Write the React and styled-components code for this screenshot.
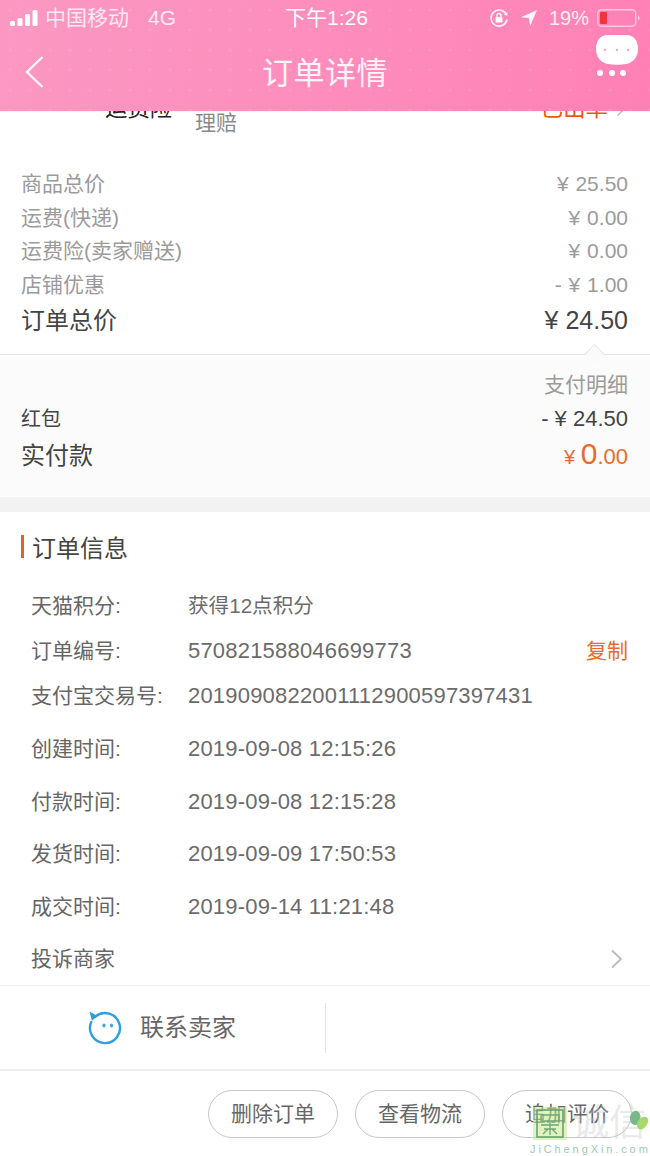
import React from "react";
import styled, { createGlobalStyle } from "styled-components";

const Global = createGlobalStyle`
  html, body { margin: 0; padding: 0; background: #fff; }
  body { font-family: "Liberation Sans", "Noto Sans CJK SC", sans-serif; }
  * { box-sizing: border-box; }
`;
const Page = styled.div`
  position: relative;
  width: 650px;
  height: 1156px;
  overflow: hidden;
  background: #fff;
  display: flex;
  flex-direction: column;
`;
const Header = styled.header`
  position: relative;
  z-index: 2;
  flex: none;
  height: 111px;
  color: #fff;
  background-color: #fe8cbb;
  background-image:
    radial-gradient(circle, rgba(255,255,255,.09) 1.4px, transparent 1.8px),
    linear-gradient(100deg, #fb98c2 0%, #fd8dbc 50%, #ff80b5 100%);
  background-size: 20px 20px, 100% 100%;
  box-shadow: 0 0 1px rgba(160,60,100,.4);
`;
const StatusBar = styled.div`
  height: 36px;
  padding: 0 10px;
  display: flex;
  align-items: center;
  justify-content: space-between;
  position: relative;
`;
const StatusSide = styled.div`
  display: flex;
  align-items: center;
  gap: ${p => p.$gap || 6}px;
`;
const StatusTime = styled.div`
  position: absolute;
  left: 285px;
  top: 5px;
  font-size: 21px;
  line-height: 26px;
  white-space: nowrap;
`;
const Carrier = styled.span`
  font-size: 21px;
  line-height: 26px;
  opacity: .8;
`;
const NetType = styled.span`
  margin-left: 13px;
  font-size: 21px;
  line-height: 26px;
  opacity: .8;
`;
const Percent = styled.span`
  font-size: 20px;
  line-height: 26px;
  margin-right: -3px;
  opacity: .85;
`;
const NavBar = styled.div`
  position: relative;
  height: 75px;
  display: flex;
  align-items: center;
  justify-content: center;
`;
const NavTitle = styled.h1`
  margin: 0 0 6px;
  font-size: 31px;
  font-weight: 400;
  letter-spacing: 0.5px;
  color: rgba(255,255,255,.92);
`;
const BackIcon = styled.svg`
  position: absolute;
  left: 24px;
  top: 19px;
`;
const MoreIcon = styled.svg`
  position: absolute;
  left: 596px;
  top: -1px;
`;
const Content = styled.main`
  flex: 1;
  display: flex;
  flex-direction: column;
  min-height: 0;
`;
const ClippedRow = styled.div`
  height: 58px;
  margin-top: -15px;
  position: relative;
  flex: none;
  display: flex;
  padding: 0 24px 0 105px;
  font-size: 22.4px;
`;
const InsuranceName = styled.span`
  color: #222;
  line-height: 26px;
  width: 90px;
`;
const InsuranceNote = styled.span`
  color: #8a8a8a;
  font-size: 21px;
  line-height: 28px;
  margin-top: 13px;
`;
const InsuranceState = styled.span`
  margin-left: auto;
  color: #e8590c;
  line-height: 26px;
  display: flex;
  gap: 8px;
  align-items: center;
  height: 26px;
`;
const Summary = styled.section`
  flex: none;
  height: 201px;
  padding: 13px 22px 0 21px;
  border-bottom: 1px solid #e4e4e4;
  position: relative;
`;
const PriceRow = styled.div`
  display: flex;
  justify-content: space-between;
  align-items: baseline;
  height: ${p => p.$h || 33.7}px;
  line-height: ${p => p.$h || 33.7}px;
  color: ${p => p.$color || "#9b9b9b"};
  font-size: ${p => p.$size || 21}px;
`;
const Money = styled.span`
  font-size: ${p => p.$size || 21}px;
  word-spacing: ${p => (p.$size ? 0 : 1)}px;
  color: ${p => p.$color || "inherit"};
`;
const Notch = styled.span`
  position: absolute;
  right: 48px;
  bottom: -8px;
  width: 15px;
  height: 15px;
  transform: rotate(45deg);
  background: #fafafa;
  border-left: 1px solid #e4e4e4;
  border-top: 1px solid #e4e4e4;
`;
const PayPanel = styled.section`
  flex: none;
  height: 142px;
  padding: 13px 22px 0 21px;
  background: #fbfbfb;
`;
const DetailLink = styled.div`
  text-align: right;
  color: #9b9b9b;
  font-size: 21px;
  line-height: 33px;
  margin-bottom: 2px;
`;
const Gap = styled.div`
  flex: none;
  height: 15px;
  background: #f2f2f2;
`;
const Info = styled.section`
  flex: 1;
`;
const InfoTitle = styled.h2`
  margin: 23px 0 0 21px;
  padding-left: 8px;
  height: 23px;
  display: flex;
  align-items: center;
  border-left: 3px solid #e8601c;
  font-size: 24px;
  font-weight: 400;
  color: #444;
`;
const InfoRows = styled.div`
  margin-top: 33px;
  padding: 0 22px 0 31px;
`;
const InfoRow = styled.div`
  display: flex;
  align-items: baseline;
  height: ${p => p.$h}px;
  line-height: 30px;
  color: #666;
  font-size: 21px;
`;
const Label = styled.span`
  flex: none;
  width: 157px;
  white-space: nowrap;
`;
const Value = styled.span`
  flex: 1;
  white-space: nowrap;
  color: #6b6b6b;
  font-size: ${p => (p.$cjk ? 20.6 : 22)}px;
  letter-spacing: ${p => (p.$cjk ? 0 : 0.2)}px;
`;
const CopyLink = styled.span`
  color: #e96a2b;
`;
const RowChevron = styled.span`
  margin-right: 5px;
  align-self: center;
  display: flex;
  margin-top: -10px;
`;
const ContactBar = styled.div`
  flex: none;
  height: 86px;
  border-top: 1px solid #f3f3f3;
  border-bottom: 2px solid #efefef;
  display: flex;
  align-items: center;
`;
const ContactCell = styled.div`
  width: 326px;
  height: 50px;
  border-right: 1px solid #e3e3e3;
  padding-left: 88px;
  display: flex;
  align-items: center;
  gap: 18px;
  color: #666;
  font-size: 24px;
`;
const ContactLabel = styled.span`
  margin-top: -5px;
`;
const Actions = styled.div`
  flex: none;
  height: 85px;
  padding: 19px 18px 0 0;
  display: flex;
  justify-content: flex-end;
  gap: 17px;
`;
const Pill = styled.button`
  width: 130px;
  height: 48px;
  padding: 0 0 4px;
  background: #fff;
  border: 1px solid #c8c8c8;
  border-radius: 24px;
  color: #666;
  font: 400 21px "Liberation Sans", "Noto Sans CJK SC", sans-serif;
`;
const Watermark = styled.div`
  position: absolute;
  left: 533px;
  top: 1107px;
  width: 117px;
  height: 49px;
  pointer-events: none;
`;
const WatermarkName = styled.div`
  position: absolute;
  left: 39px;
  top: -3px;
  font-size: 37px;
  line-height: 40px;
  color: rgba(200,200,200,.4);
`;
const WatermarkLeaf = styled.svg`
  position: absolute;
  left: 96px;
  top: 3px;
`;
const WatermarkUrl = styled.div`
  position: absolute;
  left: -3px;
  top: 36px;
  font-size: 11px;
  line-height: 13px;
  letter-spacing: 2.9px;
  white-space: nowrap;
  color: #9cc9b5;
`;

const prices = [
  ["商品总价", "¥ 25.50"],
  ["运费(快递)", "¥ 0.00"],
  ["运费险(卖家赠送)", "¥ 0.00"],
  ["店铺优惠", "- ¥ 1.00"],
];
const info = [
  ["天猫积分:", "获得12点积分", 45, false, true],
  ["订单编号:", "570821588046699773", 45, true],
  ["支付宝交易号:", "2019090822001112900597397431", 53],
  ["创建时间:", "2019-09-08 12:15:26", 53],
  ["付款时间:", "2019-09-08 12:15:28", 52],
  ["发货时间:", "2019-09-09 17:50:53", 53],
  ["成交时间:", "2019-09-14 11:21:48", 52],
];

const Signal = () => (
  <svg width="29" height="16" viewBox="0 0 29 16" fill="#fff" aria-hidden="true">
    <rect x="0" y="11" width="5" height="5" rx="1.5" />
    <rect x="7.5" y="8" width="5" height="8" rx="1.5" />
    <rect x="15" y="4" width="5" height="12" rx="1.5" />
    <rect x="22.5" y="0" width="5" height="16" rx="1.5" />
  </svg>
);
const RotationLock = () => (
  <svg width="20" height="20" viewBox="0 0 20 20" fill="none" aria-hidden="true">
    <path d="M17.500 7A8 8 0 1 0 18 11.500" stroke="#fff" strokeWidth="1.6" opacity=".9" />
    <path d="M15 6.500l3 1.200.6-3.200z" fill="#fff" />
    <rect x="6.500" y="9" width="7" height="5.500" rx="1" fill="#fff" />
    <path d="M8 9V7.500a2 2 0 0 1 4 0V9" stroke="#fff" strokeWidth="1.3" />
  </svg>
);
const LocationArrow = () => (
  <svg width="18" height="18" viewBox="0 0 18 18" aria-hidden="true">
    <path d="M17 1L1 8.200l7.800.9 1.400 7.900z" fill="#fff" opacity=".92" />
  </svg>
);
const Battery = () => (
  <svg width="43" height="18" viewBox="0 0 43 18" aria-hidden="true">
    <rect x=".75" y=".75" width="38" height="16.500" rx="4" fill="none" stroke="#fff" strokeOpacity=".55" strokeWidth="1.5" />
    <rect x="3" y="3" width="7" height="12" rx="1" fill="#f5333f" />
    <path d="M41 6.500c1.200.4 1.600 1.300 1.600 2.500s-.4 2.100-1.600 2.500z" fill="#fff" fillOpacity=".55" />
  </svg>
);
const Chevron = ({ color = "#bbb", w = 13, h = 20 }) => (
  <svg width={w} height={h} viewBox="0 0 13 20" fill="none" aria-hidden="true">
    <path d="M2 1.500L11 10l-9 8.500" stroke={color} strokeWidth="1.8" />
  </svg>
);
const Smile = () => (
  <svg width="34" height="34" viewBox="0 0 34 34" fill="none" aria-hidden="true">
    <path d="M7.500 5.500A15 15 0 1 1 3.300 11" stroke="#2b9fdc" strokeWidth="2.400" strokeLinecap="round" />
    <path d="M1.500 .5l8 4.600-5.600 4.600z" fill="#2b9fdc" />
    <ellipse cx="16" cy="14.500" rx="1.600" ry="2" fill="#3fa6dc" />
    <ellipse cx="23.500" cy="14.500" rx="1.600" ry="2" fill="#3fa6dc" />
  </svg>
);

export default function App() {
  return (
    <Page>
      <Global />
      <Header>
        <StatusBar>
          <StatusSide>
            <Signal />
            <Carrier>中国移动</Carrier>
            <NetType>4G</NetType>
          </StatusSide>
          <StatusTime>下午1:26</StatusTime>
          <StatusSide $gap={11}>
            <RotationLock />
            <LocationArrow />
            <Percent>19%</Percent>
            <Battery />
          </StatusSide>
        </StatusBar>
        <NavBar>
          <BackIcon width="22" height="34" viewBox="0 0 22 34" fill="none" aria-hidden="true">
            <path d="M18.500 2L3 17l15.500 15" stroke="#fff" strokeWidth="2.400" opacity=".92" />
          </BackIcon>
          <NavTitle>订单详情</NavTitle>
          <MoreIcon width="42" height="44" viewBox="0 0 42 44" aria-hidden="true">
            <path d="M12 0h18c8 0 12 6 12 14s-5 14-12 15c-5 1-13 1-18 0C5 28 0 22 0 14S4 0 12 0z" fill="#fff" />
            <circle cx="9" cy="15" r="1.200" fill="#f7a6c8" />
            <circle cx="21" cy="15" r="1.200" fill="#f7a6c8" />
            <circle cx="32" cy="15" r="1.200" fill="#f7a6c8" />
            <circle cx="4" cy="38" r="3" fill="#fff" />
            <circle cx="16" cy="38" r="3" fill="#fff" />
            <circle cx="27" cy="38" r="3" fill="#fff" />
          </MoreIcon>
        </NavBar>
      </Header>
      <Content>
        <ClippedRow>
          <InsuranceName>运费险</InsuranceName>
          <InsuranceNote>理赔</InsuranceNote>
          <InsuranceState>已出单<Chevron w={10} h={16} /></InsuranceState>
        </ClippedRow>
        <Summary>
          {prices.map(([name, amount]) => (
            <PriceRow key={name}>
              <span>{name}</span>
              <Money>{amount}</Money>
            </PriceRow>
          ))}
          <PriceRow $h={36} $color="#444" $size={24}>
            <span>订单总价</span>
            <Money $size={25}>¥ 24.50</Money>
          </PriceRow>
          <Notch />
        </Summary>
        <PayPanel>
          <DetailLink>支付明细</DetailLink>
          <PriceRow $h={31} $color="#444" $size={20}>
            <span>红包</span>
            <Money $size={22}>- ¥ 24.50</Money>
          </PriceRow>
          <PriceRow $h={40} $color="#444" $size={24}>
            <span>实付款</span>
            <span>
              <Money $size={20} $color="#e96a2b">¥ </Money>
              <Money $size={30} $color="#e96a2b">0</Money>
              <Money $size={22} $color="#e96a2b">.00</Money>
            </span>
          </PriceRow>
        </PayPanel>
        <Gap />
        <Info>
          <InfoTitle>订单信息</InfoTitle>
          <InfoRows>
            {info.map(([label, value, h, copy, cjk]) => (
              <InfoRow key={label} $h={h}>
                <Label>{label}</Label>
                <Value $cjk={cjk}>{value}</Value>
                {copy && <CopyLink>复制</CopyLink>}
              </InfoRow>
            ))}
            <InfoRow $h={40}>
              <Label>投诉商家</Label>
              <Value />
              <RowChevron><Chevron /></RowChevron>
            </InfoRow>
          </InfoRows>
        </Info>
        <ContactBar>
          <ContactCell>
            <Smile />
            <ContactLabel>联系卖家</ContactLabel>
          </ContactCell>
        </ContactBar>
        <Actions>
          <Pill>删除订单</Pill>
          <Pill>查看物流</Pill>
          <Pill>追加评价</Pill>
        </Actions>
      </Content>
      <Watermark>
        <svg width="34" height="33" viewBox="0 0 34 33" fill="none" aria-hidden="true">
          <rect x="0" y="0" width="34" height="33" fill="#c6e88a" opacity=".55" />
          <rect x="4" y="3" width="26" height="27" stroke="#5f9e6e" strokeWidth="1.500" />
          <path d="M8 8h18v6H8zM8 18h18M11 22h12M17 14v14M10 27l5-5M24 27l-5-5" stroke="#6ea87a" strokeWidth="1.300" />
        </svg>
        <WatermarkName>诚信</WatermarkName>
        <WatermarkLeaf width="20" height="26" viewBox="0 0 20 26" aria-hidden="true">
          <path d="M1 8C1 3 5 0 8 1c3 1 4 5 3 9-1 3-3 5-5 5C3 15 1 12 1 8z" fill="#77b98a" />
          <path d="M8 14c1-5 5-8 9-7 3 1 3 5 0 9-2 3-5 4-7 3-2-1-2-3-2-5z" fill="#a7d86a" />
        </WatermarkLeaf>
        <WatermarkUrl>JiChengXin.com</WatermarkUrl>
      </Watermark>
    </Page>
  );
}
